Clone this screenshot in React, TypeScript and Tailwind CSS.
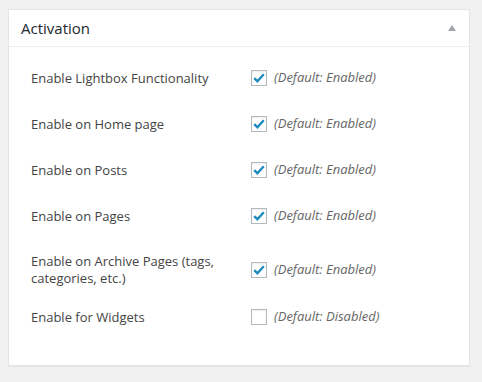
import React from "react";

const ROWS = [
  { label: "Enable Lightbox Functionality", on: true, h: "h-[46px]" },
  { label: "Enable on Home page", on: true, h: "h-[46px]" },
  { label: "Enable on Posts", on: true, h: "h-[46px]" },
  { label: "Enable on Pages", on: true, h: "h-[46px]" },
  { label: "Enable on Archive Pages (tags, categories, etc.)", on: true, h: "h-[62px]" },
  { label: "Enable for Widgets", on: false, h: "h-[32px]" },
];

function Check({ on }: { on: boolean }) {
  return (
    <span className="w-[16px] h-[16px] shrink-0 border border-[#b4b9be] bg-white shadow-[inset_0_1px_2px_rgba(0,0,0,0.07)] flex items-center justify-center">
      {on && (
        <svg width="14" height="14" viewBox="0 0 14 14">
          <path d="M2.2 7.2 L5.4 10.2 L11.8 3.2" fill="none" stroke="#1e8cbe" strokeWidth="2.4" strokeLinejoin="miter" />
        </svg>
      )}
    </span>
  );
}

export default function App() {
  return (
    <div className="w-[482px] h-[382px] bg-[#f1f1f1] pt-[9px] pl-[8px] font-['Open_Sans',sans-serif]">
      <div className="w-[462px] h-[357px] bg-white border border-[#e5e5e5] shadow-[0_1px_1px_rgba(0,0,0,0.04)]">
        <div className="h-[37px] border-b border-[#eeeeee] flex items-center justify-between pl-[12px] pr-[13px]">
          <span className="text-[15px] text-[#23282d]">Activation</span>
          <svg width="8" height="6" viewBox="0 0 8 6">
            <path d="M4 0 L8 6 L0 6 Z" fill="#a0a5aa" />
          </svg>
        </div>
        <div className="pt-[8px] pl-[22px]">
          {ROWS.map((r) => (
            <div key={r.label} className={`${r.h} flex items-center`}>
              <div className="w-[220px] pr-[10px] text-[13px] leading-[17px] text-[#444444]">{r.label}</div>
              <Check on={r.on} />
              <span className="ml-[7px] text-[13px] italic text-[#666666]">
                {r.on ? "(Default: Enabled)" : "(Default: Disabled)"}
              </span>
            </div>
          ))}
        </div>
      </div>
    </div>
  );
}
